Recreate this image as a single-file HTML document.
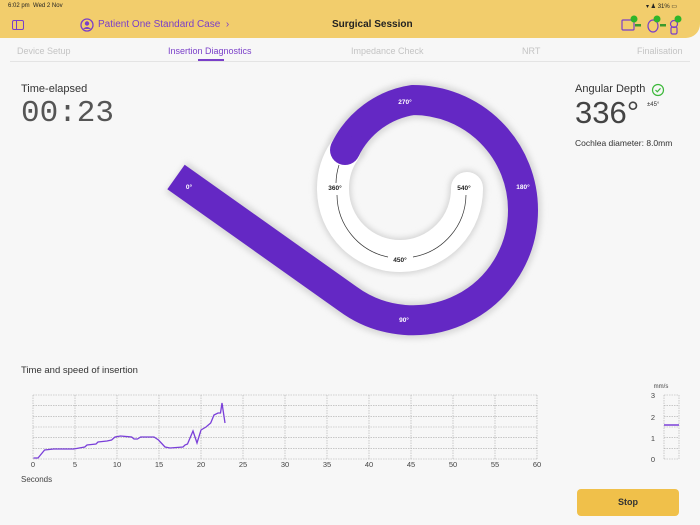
<!DOCTYPE html>
<html><head><meta charset="utf-8"><style>
*{margin:0;padding:0;box-sizing:border-box}
body{width:700px;height:525px;background:#f7f7f7;font-family:"Liberation Sans",sans-serif;position:relative;overflow:hidden;color:#333}
.a{position:absolute;white-space:nowrap}
#hdr{position:absolute;left:0;top:0;width:700px;height:38px;background:#f2cd6c;border-bottom-right-radius:14px}
.tab{position:absolute;top:46px;font-size:9px;color:#c4c4c4}
</style></head><body>
<div id="hdr"></div>
<div class="a" style="left:8px;top:3px;font-size:6px;color:#222">6:02 pm&nbsp; Wed 2 Nov</div>
<div class="a" style="left:646px;top:3px;font-size:6px;color:#222">▾ ♟ 31% ▭</div>
<div class="a" style="left:12px;top:20px;width:12px;height:10px;border:1.3px solid #7a3fc9;border-radius:2px"></div>
<div class="a" style="left:15.5px;top:21px;width:1.3px;height:8px;background:#7a3fc9"></div>
<svg class="a" style="left:80px;top:18px" width="14" height="14"><circle cx="7" cy="7" r="6" fill="none" stroke="#7a3fc9" stroke-width="1.3"/><circle cx="7" cy="5.5" r="2.2" fill="#7a3fc9"/><path d="M3 11 Q7 7 11 11" fill="#7a3fc9"/></svg>
<div class="a" style="left:98px;top:19px;font-size:10px;color:#7a3fc9">Patient One Standard Case &nbsp;›</div>
<div class="a" style="left:332px;top:19px;font-size:10px;font-weight:bold;color:#222">Surgical Session</div>
<svg class="a" style="left:620px;top:14px" width="70" height="22"><rect x="2" y="6" width="12" height="10" rx="1" fill="none" stroke="#7a3fc9" stroke-width="1.2"/><rect x="15" y="10" width="6" height="2.5" fill="#3c9a2c"/><ellipse cx="33" cy="12" rx="5" ry="6" fill="none" stroke="#7a3fc9" stroke-width="1.2"/><rect x="40" y="10" width="6" height="2.5" fill="#3c9a2c"/><circle cx="54" cy="10" r="3.5" fill="none" stroke="#7a3fc9" stroke-width="1.2"/><rect x="51" y="13" width="6" height="7" rx="1.5" fill="none" stroke="#7a3fc9" stroke-width="1.2"/><circle cx="14" cy="5" r="3.5" fill="#2fb52a"/><circle cx="37" cy="5" r="3.5" fill="#2fb52a"/><circle cx="58" cy="5" r="3.5" fill="#2fb52a"/></svg>
<div class="tab" style="left:17px">Device Setup</div>
<div class="tab" style="left:168px;color:#7a3fc9">Insertion Diagnostics</div>
<div class="a" style="left:198px;top:59px;width:26px;height:2px;background:#7a3fc9"></div>
<div class="tab" style="left:351px">Impedance Check</div>
<div class="tab" style="left:522px">NRT</div>
<div class="tab" style="left:637px">Finalisation</div>
<div class="a" style="left:10px;top:61px;width:680px;height:1px;background:#e4e4e4"></div>

<div class="a" style="left:21px;top:83px;font-size:11px;color:#333">Time-elapsed</div>
<div class="a" style="left:21px;top:96px;font-size:31px;font-family:'Liberation Mono',monospace;color:#555">00:23</div>

<div class="a" style="left:575px;top:83px;font-size:11px;color:#333">Angular Depth</div>
<svg class="a" style="left:651px;top:83px" width="14" height="14"><circle cx="7" cy="7" r="5.5" fill="none" stroke="#3cb83a" stroke-width="1.2"/><path d="M4.5 7 L6.3 8.8 L9.5 5.3" fill="none" stroke="#3cb83a" stroke-width="1.2"/></svg>
<div class="a" style="left:575px;top:95px;font-size:31px;color:#444">336°</div>
<div class="a" style="left:647px;top:102px;font-size:6px;color:#333">±45°</div>
<div class="a" style="left:575px;top:138px;font-size:8.5px;color:#333">Cochlea diameter: 8.0mm</div>

<svg class="a" style="left:0;top:0" width="700" height="360">
<defs><filter id="sh" x="-20%" y="-20%" width="140%" height="140%"><feGaussianBlur stdDeviation="3"/></filter></defs>
<path d="M345 150 A67 67 0 0 0 333 190 A67 67 0 0 0 467 188" fill="none" stroke="#d4d4d4" stroke-width="36" stroke-linecap="round" filter="url(#sh)"/>
<path d="M345 150 A67 67 0 0 0 333 190 A67 67 0 0 0 467 188" fill="none" stroke="#fff" stroke-width="32" stroke-linecap="round"/>
<path d="M339 165 A64 64 0 0 0 336 183 M337 195 A64 64 0 0 0 388 257 M413 257 A64 64 0 0 0 466 195" fill="none" stroke="#333" stroke-width="0.7"/>
<path d="M176 177 L348 299 A110 110 0 0 0 523 210 A110 110 0 0 0 413 100 A90 90 0 0 0 345 150" fill="none" stroke="#d8d8d8" stroke-width="37" filter="url(#sh)"/>
<path d="M176 177 L348 299 A110 110 0 0 0 523 210 A110 110 0 0 0 413 100 A90 90 0 0 0 345 150" fill="none" stroke="#6428c4" stroke-width="30"/>
<circle cx="345" cy="150" r="15" fill="#6428c4"/>
<g font-family="Liberation Sans,sans-serif" font-size="6.5" font-weight="bold" text-anchor="middle">
<text x="189" y="189" fill="#fff">0°</text><text x="404" y="322" fill="#fff">90°</text><text x="523" y="189" fill="#fff">180°</text><text x="405" y="104" fill="#fff">270°</text>
<text x="335" y="190" fill="#222">360°</text><text x="400" y="262" fill="#222">450°</text><text x="464" y="190" fill="#222">540°</text></g>
</svg>

<div class="a" style="left:21px;top:365px;font-size:9.5px;color:#333">Time and speed of insertion</div>
<svg class="a" style="left:0;top:380px" width="700" height="100">
<g stroke="#aaa" stroke-width="0.6" stroke-dasharray="1.5 1">
<path d="M33 15H537M33 25.7H537M33 36.3H537M33 47H537M33 57.7H537M33 68.3H537M33 79H537"/>
<path d="M33 15V79M75 15V79M117 15V79M159 15V79M201 15V79M243 15V79M285 15V79M327 15V79M369 15V79M411 15V79M453 15V79M495 15V79M537 15V79"/>
<path d="M664 15V79M679 15V79M664 15H679M664 36.3H679M664 57.7H679M664 79H679M664 25.7H679M664 47H679M664 68.3H679"/>
</g>
<polyline fill="none" stroke="#7a3fd9" stroke-width="1.3" points="33.5,78 38,78 44.6,70 53.6,69 62.5,69 73.7,69 84.8,67 87,65 96,64 98,62 107,61 111.6,60 115,57 120.5,56 131.7,57 134,59 137.5,59 140.6,57 147,57 154,57 158.5,60 165,67 170,68 183,67 185,65 187.5,64 193,51 197,63 201,50 206,47 210.7,43 214,35 218,33 220.5,33 222,23 225,43"/>
<path d="M664 45H679" stroke="#7a3fd9" stroke-width="1.5"/>
<g font-family="Liberation Sans,sans-serif" font-size="7.5" fill="#444" text-anchor="middle">
<text x="33" y="87">0</text><text x="75" y="87">5</text><text x="117" y="87">10</text><text x="159" y="87">15</text><text x="201" y="87">20</text><text x="243" y="87">25</text><text x="285" y="87">30</text><text x="327" y="87">35</text><text x="369" y="87">40</text><text x="411" y="87">45</text><text x="453" y="87">50</text><text x="495" y="87">55</text><text x="537" y="87">60</text>
<text x="653" y="18">3</text><text x="653" y="40">2</text><text x="653" y="61">1</text><text x="653" y="82">0</text>
<text x="661" y="8" font-size="6">mm/s</text></g>
</svg>
<div class="a" style="left:21px;top:475px;font-size:8px;color:#444">Seconds</div>
<div class="a" style="left:577px;top:489px;width:102px;height:27px;background:#f0c04a;border-radius:4px;font-size:9px;font-weight:bold;color:#333;text-align:center;line-height:27px">Stop</div>
</body></html>
